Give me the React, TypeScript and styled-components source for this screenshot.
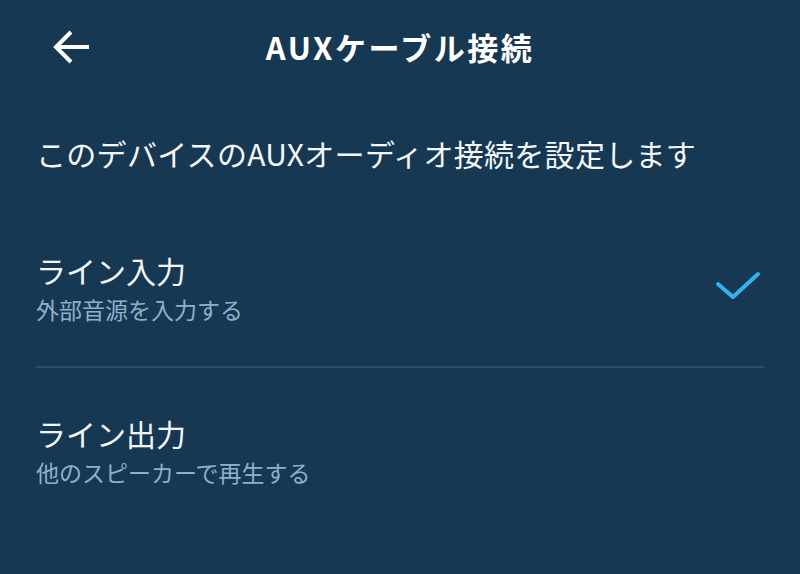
import React from "react";
import styled, { createGlobalStyle } from "styled-components";

const GlobalStyle = createGlobalStyle`
  html, body {
    margin: 0;
    padding: 0;
    background: #173853;
  }
  body {
    font-family: "Noto Sans CJK JP", "Noto Sans", sans-serif;
    color: #f4f7fa;
  }
`;

type Option = {
  title: string;
  subtitle: string;
  selected: boolean;
};

const OPTIONS: Option[] = [
  { title: "ライン入力", subtitle: "外部音源を入力する", selected: true },
  { title: "ライン出力", subtitle: "他のスピーカーで再生する", selected: false },
];

const App = () => {
  return (
    <>
      <GlobalStyle />
      <SPage>
        <SHeader>
          <SBackButton aria-label="戻る">
            <svg width="40" height="40" viewBox="0 0 40 40">
              <path
                d="M37 20H5M19 5L4 20l15 15"
                fill="none"
                stroke="#ffffff"
                strokeWidth="4"
                strokeLinejoin="miter"
              />
            </svg>
          </SBackButton>
          <STitle>AUXケーブル接続</STitle>
        </SHeader>

        <SDescription>このデバイスのAUXオーディオ接続を設定します</SDescription>

        <SList>
          {OPTIONS.map((option, i) => (
            <React.Fragment key={option.title}>
              {i > 0 && <SDivider />}
              <SRow $first={i === 0}>
                <SRowText>
                  <SRowTitle>{option.title}</SRowTitle>
                  <SRowSubtitle>{option.subtitle}</SRowSubtitle>
                </SRowText>
                {option.selected && (
                  <SCheck width="48" height="36" viewBox="0 0 48 36">
                    <path
                      d="M4 15l15 13L44 5"
                      fill="none"
                      stroke="#2db5ec"
                      strokeWidth="4"
                      strokeLinecap="round"
                      strokeLinejoin="round"
                    />
                  </SCheck>
                )}
              </SRow>
            </React.Fragment>
          ))}
        </SList>
      </SPage>
    </>
  );
};

const SPage = styled.div`
  width: 800px;
  height: 574px;
  overflow: hidden;
  background: #173853;
`;

const SHeader = styled.header`
  position: relative;
  display: flex;
  align-items: center;
  justify-content: center;
  height: 94px;
`;

const SBackButton = styled.button`
  position: absolute;
  left: 52px;
  top: 27px;
  display: flex;
  padding: 0;
  border: none;
  background: none;
  cursor: pointer;
`;

const STitle = styled.h1`
  margin: 0;
  font-size: 31px;
  font-weight: 700;
  letter-spacing: 2.5px;
  line-height: 40px;
  color: #ffffff;
`;

const SDescription = styled.p`
  margin: 0;
  padding: 39px 36px 0;
  font-size: 30px;
  letter-spacing: 0.3px;
  line-height: 40px;
  color: #f4f7fa;
`;

const SList = styled.div`
  display: flex;
  flex-direction: column;
`;

const SRow = styled.div<{ $first: boolean }>`
  display: flex;
  align-items: center;
  justify-content: space-between;
  padding: ${({ $first }) => ($first ? "75px" : "43px")} 42px 40px 36px;
`;

const SRowText = styled.div`
  display: flex;
  flex-direction: column;
`;

const SRowTitle = styled.span`
  font-size: 30px;
  line-height: 44px;
  color: #f4f7fa;
`;

const SRowSubtitle = styled.span`
  font-size: 23px;
  line-height: 34px;
  color: #8db1cb;
`;

const SCheck = styled.svg`
  display: block;
  margin-right: -4px;
`;

const SDivider = styled.div`
  height: 2px;
  margin: 0 36px;
  background: #2c4f69;
`;

export default App;
